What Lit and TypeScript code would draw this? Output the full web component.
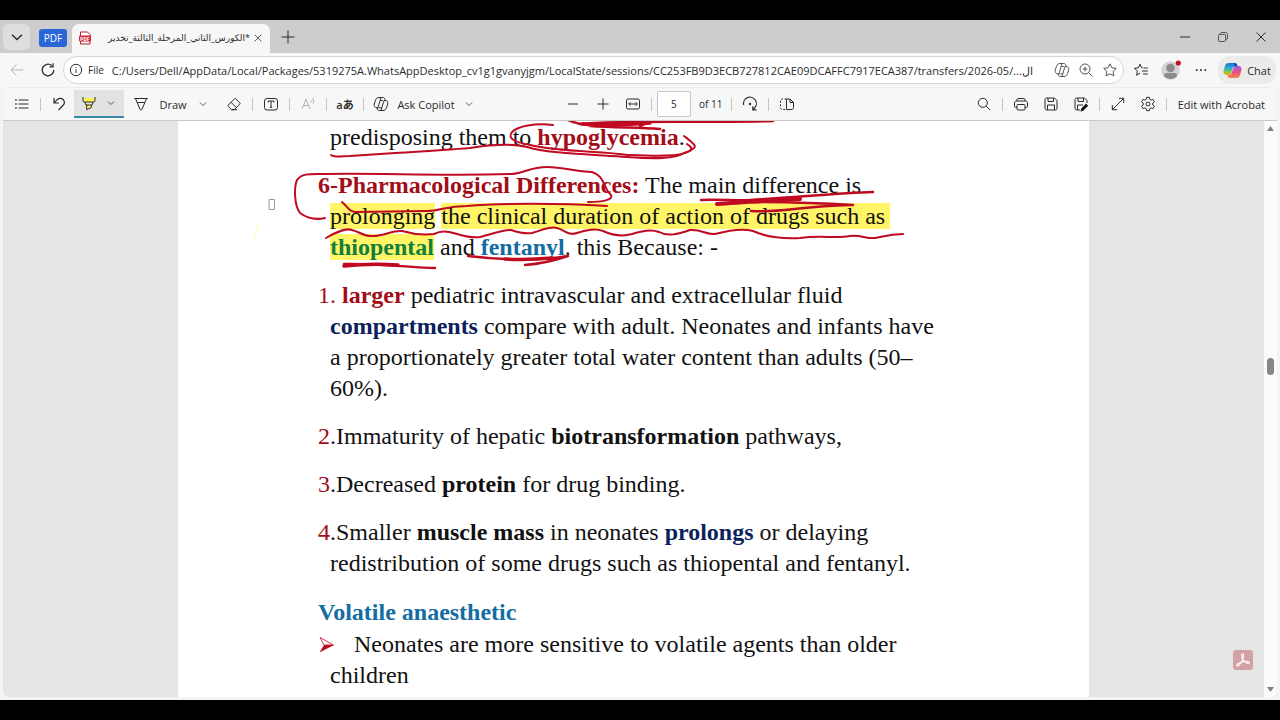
import { LitElement, html, css, svg } from "lit";
import { customElement, property } from "lit/decorators.js";

const shapes: Record<string, unknown> = {
  chevron: svg`<path d="M4 6 8 10l4-4"/>`,
  tabs: svg`<path stroke-width="1.400" d="m3 5.800 5 4.700 5-4.700"/>`,
  close: svg`<path d="m3.500 3.500 9 9m0-9-9 9"/>`,
  plus: svg`<path d="M8 2.500v11M2.500 8h11"/>`,
  bigplus: svg`<path d="M8 1.500v13M1.500 8h13"/>`,
  minus: svg`<path d="M3 8h10"/>`,
  restore: svg`<rect x="2" y="4.500" width="9.500" height="9.500" rx="1.800"/><path d="M4.500 4c0-1.200.7-2 2-2H11c1.800 0 3 1.200 3 3v4.500c0 1.200-.8 2-2 2"/>`,
  back: svg`<path d="M14.500 8H2m5.500-5.500L2 8l5.500 5.500"/>`,
  refresh: svg`<path stroke-width="1.300" d="M13.800 8A5.800 5.800 0 1 1 11.700 3.500M13 1.300v3.500H9.500"/>`,
  info: svg`<circle cx="8" cy="8" r="5.700"/><path d="M8 7.200v3.700"/><path stroke-width="1.400" d="M8 4.900v.8"/>`,
  copilot: svg`<path d="M5.300 11.800H3.700C1.800 11.800.8 10 1.300 8L2.500 4.300C3 2.500 4.300 1.500 6 1.500h3.800c1.200 0 1.900.7 2.200 2l.3 1M10.700 4.500h1.600c1.900 0 2.900 1.500 2.400 3.500l-1.200 3.800c-.5 1.700-1.700 2.700-3.500 2.700H6.300c-1.200 0-1.900-.8-2.100-2l-.1-.7M8 1.500 5.500 10c-.3 1.200-.9 1.800-2 1.800M8 14.500 10.500 6c.3-1 .9-1.500 2-1.500M9.800 4.500H7.500M8.500 11.800H5.500"/>`,
  zoom: svg`<circle cx="7" cy="7" r="5"/><path d="m10.700 10.700 3.800 3.800M7 4.700v4.600M4.700 7h4.600"/>`,
  star: svg`<path stroke-linejoin="round" d="m8 1.800 1.900 4 4.400.6-3.200 3.100.8 4.400L8 11.800l-3.900 2.100.8-4.400L1.700 6.400l4.400-.6z"/>`,
  favorites: svg`<path stroke-linejoin="round" d="M9.800 5.800H8.600L7 2.200 5.400 5.800l-4 .5 3 2.700-.8 4.300L7 11.200M10.500 6h4.300M9 9h5.800M10 12h4.800"/>`,
  dots: svg`<g fill="currentColor" stroke="none"><circle cx="2.300" cy="8" r="1.300"/><circle cx="8" cy="8" r="1.300"/><circle cx="13.700" cy="8" r="1.300"/></g>`,
  toc: svg`<path d="M4.500 4h10M4.500 8h10M4.500 12h10"/><path stroke-width="1.500" d="M1.200 4h1.500M1.200 8h1.500M1.200 12h1.500"/>`,
  undo: svg`<path stroke-width="1.200" d="M3 2v5h5M3.300 6.700l3-3c2.200-2 5-1.500 6.300.4 1.200 1.800.8 4-.7 5.400L7.500 14"/>`,
  highlighter: svg`<path fill="#fff34d" stroke="none" d="M2.500 3h11v4h-11zM6 9.500h4v3l-4 1.600z"/><path d="M2 2v3.700C2 6.500 2.500 7 3.200 7h9.600c.7 0 1.200-.5 1.200-1.300V2M3.700 7 5 10h6l1.300-3M5.700 10v4.700l4.600-2.200V10"/>`,
  pen: svg`<path stroke-linejoin="round" d="M1.200 2.500h13.600M2.500 2.500 7 13.300c.4 1 1.600 1 2 0L13.500 2.500M4.300 6.500h7.400"/>`,
  eraser: svg`<path stroke-linejoin="round" d="m9.200 2.300 4.500 4.400c.5.500.5 1 0 1.500l-5.500 5.500H5.500L2.300 10.500c-.5-.5-.5-1 0-1.500L9 2.300M5 6.300l5 5M5.500 13.700H11"/>`,
  textbox: svg`<rect x="1.500" y="2.500" width="13" height="11.500" rx="2.500"/><path d="M5 6.500V5h6v1.500M8 5v6.300M6.800 11.300h2.400"/>`,
  aloud: svg`<path d="m2 13 4-10 4 10M3.500 9.500h5M10.500 4c.8.800.8 1.700.5 2.500M12.500 2c1.400 1.600 1.400 3.700.5 5.500"/>`,
  fit: svg`<rect x="1.500" y="3" width="13" height="10" rx="1.500"/><path d="M3.800 8h8.400M5.500 6.200 3.700 8l1.800 1.800M10.500 6.200 12.300 8l-1.800 1.800"/>`,
  rotate: svg`<path stroke-width="1.200" d="M1.700 9A6.400 6.400 0 1 1 12 12.500l-1 1.200M10.800 10.200v3.600h3.600"/><circle cx="8" cy="8" r="1.200" fill="currentColor" stroke="none"/>`,
  pageview: svg`<path d="M7.500 3v10.500M7.500 3H11l3.500 3.500v5.300c0 1-.6 1.700-1.600 1.700H7.500M11 3v3.500h3.500"/><path stroke-dasharray="2 1.500" d="M7.500 3H3.300c-1 0-1.800.7-1.800 1.700v7c0 1 .8 1.800 1.800 1.800h4.200"/>`,
  search: svg`<circle cx="6.800" cy="6.800" r="4.500"/><path d="m10.200 10.200 4 4"/>`,
  print: svg`<path d="M4 5V3.700c0-.7.500-1.200 1.200-1.200h5.600c.7 0 1.200.5 1.200 1.200V5M4 11.500H3c-.9 0-1.500-.6-1.500-1.500V7c0-1.200.8-2 2-2h9c1.200 0 2 .8 2 2v3c0 .9-.6 1.500-1.500 1.500h-1"/><rect x="4" y="8.500" width="8" height="5.500" rx="1"/>`,
  save: svg`<path stroke-linejoin="round" d="M2 3.700C2 2.700 2.700 2 3.700 2h7.800L14 4.500v7.800c0 1-.7 1.700-1.700 1.700H3.700c-1 0-1.700-.7-1.700-1.700zM5 2v3.500h5.500V2M4.500 14V9h7v5"/>`,
  saveas: svg`<path stroke-linejoin="round" d="M7 14H3.700c-1 0-1.700-.7-1.700-1.700V3.700C2 2.700 2.700 2 3.700 2h7.800L14 4.500V7M5 2v3.500h5.500V2M4.500 14V9H10"/><path stroke="none" fill="#111" d="m13 7.500 2.200 2.200-5 5L7.500 15.500l.6-2.800z"/>`,
  expand: svg`<path d="M2.300 13.700 13.700 2.300M9 2.300h4.700V7M2.300 9v4.700H7"/>`,
  gear: svg`<circle cx="8" cy="8" r="2"/><path stroke-linejoin="round" d="m6.700 1.300-.4 2-1.300.8-2-.7-1.400 2.300L3.200 7v2l-1.600 1.300L3 12.600l2-.7 1.300.8.400 2h2.600l.4-2 1.300-.8 2 .7 1.400-2.300L12.800 9V7l1.600-1.300L13 3.400l-2 .7-1.300-.8-.4-2z"/>`,
};

const icon = (name: string, size = "") =>
  html`<svg class="icon ${size}" viewBox="0 0 16 16" aria-hidden="true">${shapes[name]}</svg>`;

const iconStyles = css`
  :host { font-family: "Open Sans", "Noto Sans", sans-serif; font-size: 11px; color: #2b2b2b; }
  * { box-sizing: border-box; }
  button { font: inherit; color: inherit; border: 0; background: none; padding: 0; margin: 0;
    display: flex; align-items: center; justify-content: center; flex: none; }
  .icon { width: 16px; height: 16px; fill: none; stroke: currentColor; stroke-width: 1; flex: none; display: block; }
  .small { width: 12px; height: 12px; }
`;

@customElement("tab-strip")
class TabStrip extends LitElement {
  static styles = [iconStyles, css`
    :host { display: flex; align-items: flex-end; height: 33px; background: #cdcdcd; padding-left: 3px; }
    .menu { width: 27px; height: 26px; border-radius: 6px; background: #dedede; margin-bottom: 3px; }
    .group { height: 18px; width: 28px; margin: 0 5px 6px 9px; border-radius: 3px; background: #2b66d9; color: #fff; font-size: 10px; }
    .tab { display: flex; align-items: center; gap: 2px; width: 198px; height: 29px; padding: 0 6px 2px;
      background: #f7f7f7; border-radius: 7px 7px 0 0; }
    .title { flex: 1; min-width: 0; white-space: nowrap; direction: rtl; font-family: "Open Sans", "DejaVu Sans", sans-serif;
      font-size: 9px; line-height: 18px; }
    .new { width: 36px; height: 33px; }
    .controls { display: flex; margin-left: auto; }
    .controls button { width: 38px; height: 33px; }
    .file { width: 14px; height: 14px; flex: none; }
    .tiny { font: bold 5px "Open Sans", sans-serif; }
  `];
  render() {
    return html`
      <button class="menu" aria-label="Tab actions">${icon("tabs")}</button>
      <button class="group">PDF</button>
      <div class="tab">
        <svg class="file" viewBox="0 0 14 14" aria-hidden="true">
          <path d="M2.500 1h7L12 3.500V13H2.500z" fill="#fff" stroke="#9b2732" />
          <rect x="1" y="4.500" width="12" height="6" rx="1" fill="#d92236" />
          <text class="tiny" x="2" y="9.500" fill="#fff">PDF</text>
        </svg>
        <span class="title">*الكورس_الثاني_المرحلة_الثالثة_تخدير</span>
        <button aria-label="Close tab">${icon("close", "small")}</button>
      </div>
      <button class="new" aria-label="New tab">${icon("bigplus")}</button>
      <div class="controls">
        <button aria-label="Minimize">${icon("minus")}</button>
        <button aria-label="Restore">${icon("restore", "small")}</button>
        <button aria-label="Close">${icon("close")}</button>
      </div>`;
  }
}

@customElement("address-bar")
class AddressBar extends LitElement {
  @property() url = "";
  static styles = [iconStyles, css`
    :host { display: flex; align-items: center; height: 34px; background: #f7f7f7; padding: 0 4px 0 1px; }
    .nav { width: 31px; height: 28px; }
    .off { color: #b5b5b5; }
    .field { display: flex; align-items: center; flex: 1; min-width: 0; height: 28px; border: 1px solid #d6d6d6;
      border-radius: 14px; background: #fff; padding: 0 1px 0 4px; }
    .site { gap: 4px; font-size: 10px; }
    input { flex: 1; min-width: 0; border: 0; outline: 0; padding: 0; margin: 0 8px; background: none; font: inherit; color: inherit; }
    .field .act { width: 24px; height: 24px; color: #555; }
    .act { width: 30px; height: 28px; }
    .right { display: flex; align-items: center; padding-left: 2px; }
    .avatar { width: 20px; height: 20px; }
    .chat { gap: 5px; width: 58px; height: 28px; border-radius: 12px; background: #ebebeb; margin-left: 2px; }
    .logo { width: 19px; height: 19px; }
  `];
  render() {
    return html`
      <button class="nav off" aria-label="Back">${icon("back")}</button>
      <button class="nav" aria-label="Refresh">${icon("refresh")}</button>
      <div class="field">
        <button class="site">${icon("info")}File</button>
        <input aria-label="Address" .value=${this.url} />
        <button class="act" aria-label="Copilot">${icon("copilot")}</button>
        <button class="act" aria-label="Zoom">${icon("zoom")}</button>
        <button class="act" aria-label="Add to favorites">${icon("star")}</button>
      </div>
      <div class="right">
        <button class="act" aria-label="Favorites">${icon("favorites")}</button>
        <button class="act" aria-label="Profile">
          <svg class="avatar" viewBox="0 0 20 20" aria-hidden="true">
            <circle cx="9.500" cy="10.500" r="9.300" fill="#d2d2d2" />
            <circle cx="9.500" cy="8" r="4.300" fill="#8b8b8b" />
            <path d="M3 16c0-2 1-3 2.500-3h8c1.500 0 2.500 1 2.500 3-1.500 2-4 3-6.500 3S4.500 18 3 16z" fill="#8b8b8b" />
            <circle cx="17.300" cy="3" r="2.600" fill="#c50f1f" />
          </svg>
        </button>
        <button class="act" aria-label="Settings and more">${icon("dots", "small")}</button>
        <button class="chat">
          <svg class="logo" viewBox="0 0 20 20" aria-hidden="true">
            <defs>
              <linearGradient id="a" x1="0" y1="0" x2="0" y2="1"><stop offset="0" stop-color="#1a6fe0" /><stop offset=".45" stop-color="#26b3d1" /><stop offset=".75" stop-color="#8cc63e" /><stop offset="1" stop-color="#f5b400" /></linearGradient>
              <linearGradient id="b" x1="0" y1="0" x2="0" y2="1"><stop offset="0" stop-color="#a259e0" /><stop offset=".5" stop-color="#ec4d8c" /><stop offset="1" stop-color="#f58b3c" /></linearGradient>
            </defs>
            <path d="M6 2h6.500c1.500 0 2.200 1 2.500 2.500l.3 1h-2.500c-1.500 0-2.200.8-2.600 2L8.500 13c-.4 1.200-1 1.700-2.200 1.700H3.500C1 14.700 0 12.500.7 10l1.500-5C2.800 3 4 2 6 2z" fill="url(#a)" />
            <path d="M14 18H7.500C6 18 5.300 17 5 15.500l-.2-.8h1.700c1.500 0 2.200-.8 2.600-2L11 7c.4-1.200 1-1.700 2.200-1.700h3.300c2.500 0 3.500 2.200 2.800 4.700l-1.500 5c-.6 2-1.800 3-3.800 3z" fill="url(#b)" />
            <path d="M11 2h1.500c1.500 0 2.200 1 2.500 2.500l.3 1h-3z" fill="#1747b5" />
          </svg>Chat
        </button>
      </div>`;
  }
}

@customElement("pdf-toolbar")
class PdfToolbar extends LitElement {
  static styles = [iconStyles, css`
    :host { display: flex; align-items: center; height: 34px; margin: 0 3px; padding: 0 12px 0 4px; background: #f7f7f7;
      border: 0 solid #ececec; border-top-width: 1px; border-bottom: 1px solid #c9c9c9; border-radius: 6px 6px 0 0; }
    .group { display: flex; align-items: center; }
    .gap { flex: 9; }
    .wide { flex: 19; }
    .tool { width: 30px; height: 28px; }
    .sep { width: 1px; height: 13px; background: #c4c4c4; margin: 0 3px; }
    .active { width: 50px; height: 28px; gap: 8px; background: #e2e2e2; border-bottom: 2px solid #3b87a8; margin-right: 5px; }
    .draw { width: 84px; gap: 10px; margin-right: 6px; }
    .ask { width: 110px; gap: 8px; margin-left: 2px; }
    .translate { font-size: 11px; font-family: "Open Sans", "Noto Sans CJK JP", sans-serif; font-weight: 600; }
    .off { color: #b0b0b0; }
    .page { width: 34px; height: 26px; margin: 0 8px 0 2px; border: 1px solid #c6c6c6; border-radius: 2px; background: #fff; text-align: center;
      font: inherit; font-size: 10px; color: inherit; padding: 0; }
    .total { font-size: 10px; width: 29px; }
    .edit { margin-left: 8px; }
  `];
  render() {
    const tool = (name: string, label: string, size = "") => html`<button class="tool" aria-label=${label}>${icon(name, size)}</button>`;
    const sep = html`<span class="sep"></span>`;
    return html`
      <div class="group">
        ${tool("toc", "Table of contents")}${sep}${tool("undo", "Undo")}
        <button class="active" aria-label="Highlight">${icon("highlighter")}${icon("chevron", "small")}</button>
        <button class="draw">${icon("pen")}<span>Draw</span>${icon("chevron", "small")}</button>
        ${tool("eraser", "Erase")}${sep}${tool("textbox", "Add text")}${sep}
        <button class="tool off" aria-label="Read aloud">${icon("aloud")}</button>${sep}
        <button class="tool translate" aria-label="Translate">aあ</button>${sep}
        <button class="ask">${icon("copilot")}<span>Ask Copilot</span>${icon("chevron", "small")}</button>
      </div>
      <span class="gap"></span>
      <div class="group">
        ${tool("minus", "Zoom out")}${tool("plus", "Zoom in")}${tool("fit", "Fit to width")}${sep}
        <input class="page" aria-label="Page number" value="5" /><span class="total">of 11</span>${sep}
        ${tool("rotate", "Rotate")}${sep}${tool("pageview", "Page view")}
      </div>
      <span class="wide"></span>
      <div class="group">
        ${tool("search", "Search")}${sep}${tool("print", "Print")}${tool("save", "Save")}${tool("saveas", "Save as")}${sep}
        ${tool("expand", "Full screen")}${tool("gear", "Settings")}${sep}
        <button class="edit">Edit with Acrobat</button>
      </div>`;
  }
}

@customElement("pdf-page")
class PdfPage extends LitElement {
  static styles = css`
    :host { display: block; position: relative; flex: 0 1 911px; background: #fff; color: #111; overflow: hidden;
      font-family: "Liberation Serif", "Times New Roman", serif; font-size: 24px; line-height: 31px; }
    .text { padding: 0 0 0 152px; white-space: nowrap; }
    p, h2 { margin: 0 0 17px; font-size: 24px; }
    .item { text-indent: -12px; }
    h2 { text-indent: -12px; margin: 0; padding: 1px 0; color: #146ca4; }
    .red { color: #a30d18; }
    .navy { color: #0d1f5c; }
    .blue { color: #146ca4; }
    .green { color: #12803c; }
    mark { background: #fff566; color: inherit; }
    .end { padding-right: 5px; }
    .arrow { width: 18px; height: 18px; margin-right: 18px; vertical-align: -2px; }
    .ink { position: absolute; left: 0; top: 0; width: 911px; height: 576px; fill: none; stroke: #c00a22; stroke-width: 2; stroke-linecap: round; stroke-linejoin: round; pointer-events: none; }
    .lead { margin-top: 1px; }
  `;
  render() {
    return html`
      <div class="text">
        <p class="lead">predisposing them to <b class="red">hypoglycemia</b>.</p>
        <p class="item"><b class="red">6-Pharmacological Differences:</b> The main difference is<br />
          <mark>prolonging</mark> <mark class="end">the clinical duration of action of drugs such as</mark><br />
          <mark><b class="green">thiopental</b></mark> and <b class="blue">fentanyl</b>. this Because: -</p>
        <p class="item"><span class="red">1.</span> <b class="red">larger</b> pediatric intravascular and extracellular fluid<br />
          <b class="navy">compartments</b> compare with adult. Neonates and infants have<br />
          a proportionately greater total water content than adults (50–<br />60%).</p>
        <p class="item"><span class="red">2</span>.Immaturity of hepatic <b>biotransformation</b> pathways,</p>
        <p class="item"><span class="red">3</span>.Decreased <b>protein</b> for drug binding.</p>
        <p class="item"><span class="red">4</span>.Smaller <b>muscle mass</b> in neonates <b class="navy">prolongs</b> or delaying<br />
          redistribution of some drugs such as thiopental and fentanyl.</p>
        <h2>Volatile anaesthetic</h2>
        <p class="item"><svg class="arrow" viewBox="0 0 18 18" aria-hidden="true"><path d="M2 1.500 15.500 9H6z" fill="#fff" stroke="#c00a22" stroke-width=".8" /><path d="M1.500 16.500 6 9h10z" fill="#c00a22" /></svg>Neonates are more sensitive to volatile agents than older<br />children</p>
      </div>
      <svg class="ink" viewBox="178 121 911 576" aria-hidden="true">
        <rect x="269.500" y="199.500" width="5" height="10" stroke="#9a9a9a" stroke-width="1" />
        <path stroke="#fffbc8" d="M258 225 254 238" />
        <path stroke-width="2.500" d="M566 119C575 124 590 126 605 125M580 124C620 120 700 123 773 121M590 126C615 128 640 127 660 129M640 126 655 119" />
        <path stroke-width="3.500" d="M582 124C610 126 635 124 650 123" />
        <path d="M331 155C335 158 342 156 350 156L395 153C425 152 440 150 470 148 495 144 515 144 527 147 545 153 580 154 627 157 655 159 675 159 684 153 700 147 697 146 684 136" />
        <path d="M553 125C535 123 518 126 512 132 507 139 515 142 530 145 560 152 600 151 628 155 655 156 680 157 690 151 693 148 690 146 687 144" />
        <path d="M325 218C316 220 308 219 300 213 294 205 294 187 297 180 302 173 310 174 325 174 380 173 440 176 512 174 525 173 530 167 547 167 565 167 575 172 592 172 605 176 603 188 611 195 613 200 603 202 588 202" />
        <path d="M342 202C347 206 349 212 355 212L427 211C440 211 445 206 467 206 500 203 560 203 607 206" />
        <path d="M326 238C336 232 347 228 352 230 360 232 365 237 373 236 385 236 392 230 402 231 412 234 424 235 434 234 438 232 443 231 449 232 460 234 468 239 480 237 492 234 505 229 511 230 520 233 526 234 532 233 543 230 550 226 557 228 565 230 568 236 577 233 587 230 595 228 603 231 612 235 622 237 632 234 644 230 652 229 659 232 668 237 678 234 690 230 702 229 706 235 715 234 730 230 743 228 753 231 764 236 780 239 800 238 822 235 835 239 850 236 862 235 867 239 875 238 885 236 890 234 903 234" />
        <path stroke-width="2.500" d="M701 200C720 199 735 201 750 200 800 197 840 193 873 192" />
        <path stroke-width="4" d="M717 204C740 202 760 201 800 199" />
        <path stroke-width="2.500" d="M750 202C790 202 820 203 853 205M751 211C780 213 800 206 850 205" />
        <path stroke-width="3.500" d="M344 266C370 263 385 264 398 265" />
        <path stroke-width="2.500" d="M344 264C380 263 415 268 435 268M468 256C500 260 540 261 568 256 550 262 538 264 525 265" />
        <path stroke-width="3.500" d="M505 259C525 260 540 259 552 258" />
      </svg>`;
  }
}

@customElement("app-root")
class AppRoot extends LitElement {
  static styles = css`
    * { box-sizing: border-box; }
    :host { display: flex; flex-direction: column; box-sizing: border-box; height: 100vh; padding: 20px 0; background: #000; overflow: hidden; }
    .window { display: flex; flex-direction: column; flex: 1; min-height: 0; background: #f4f4f4; }
    .viewer { display: flex; flex: 1; min-height: 0; margin: 0 3px 3px; border-radius: 0 0 6px 6px; overflow: hidden; background: #e5e5e5; }
    .canvas { position: relative; display: flex; justify-content: center; flex: 1; min-width: 0; }
    .badge { position: absolute; right: 11px; bottom: 27px; width: 20px; height: 20px; padding: 0; border: 0; border-radius: 3px; background: #d3a0a5; }
    .mark { display: block; width: 20px; height: 20px; fill: none; stroke: #fff4f0; stroke-width: 1.300; }
    .scroll { display: flex; flex-direction: column; align-items: center; width: 13px; padding: 5px 0; background: #fbfbfb; }
    .tip { width: 7px; height: 6px; fill: #808080; flex: none; }
    .before { flex: 226; }
    .thumb { width: 7px; height: 17px; border-radius: 4px; background: #868686; }
    .after { flex: 311; }
  `;
  render() {
    return html`
      <div class="window">
        <tab-strip></tab-strip>
        <address-bar url="C:/Users/Dell/AppData/Local/Packages/5319275A.WhatsAppDesktop_cv1g1gvanyjgm/LocalState/sessions/CC253FB9D3ECB727812CAE09DCAFFC7917ECA387/transfers/2026-05/...ال"></address-bar>
        <pdf-toolbar></pdf-toolbar>
        <main class="viewer">
          <div class="canvas">
            <pdf-page></pdf-page>
            <button class="badge" aria-label="Open in Acrobat">
              <svg class="mark" viewBox="0 0 20 20"><path d="M9 4c2-1.500 2 2 .8 5C8.500 12 6 16 4.300 16c-1.500-1 1.500-3.500 5.500-4.200 3.500-.8 6.700-.3 6.500 1-.5 1.500-3.800.2-6-3C8.800 7.500 8 4.500 9 4z" /></svg>
            </button>
          </div>
          <div class="scroll">
            <svg class="tip" viewBox="0 0 7 6"><path d="M3.500 0 7 5H0z" /></svg>
            <span class="before"></span><span class="thumb"></span><span class="after"></span>
            <svg class="tip" viewBox="0 0 7 6"><path d="M3.500 6 7 1H0z" /></svg>
          </div>
        </main>
      </div>`;
  }
}
